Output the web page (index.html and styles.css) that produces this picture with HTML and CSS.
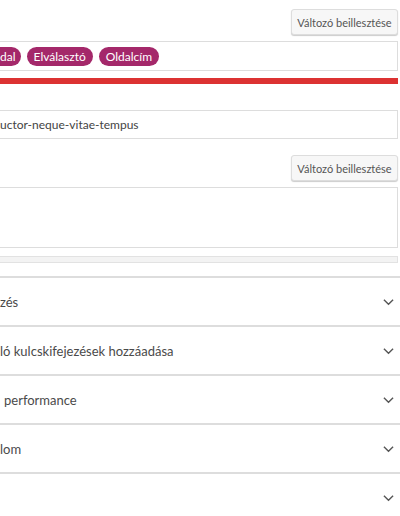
FILE: index.html
```html
<!DOCTYPE html>
<html lang="hu">
<head>
<meta charset="utf-8">
<link rel="stylesheet" href="styles.css">
</head>
<body>
<div class="panel">
  <div class="btn-row"><button class="btn">Változó beillesztése</button></div>
  <div class="field tags">
    <span class="pill pill-cut">dal</span>
    <span class="pill">Elválasztó</span>
    <span class="pill">Oldalcím</span>
  </div>
  <div class="meter meter-red"></div>
  <div class="field slug">uctor-neque-vitae-tempus</div>
  <div class="btn-row btn-row-2"><button class="btn">Változó beillesztése</button></div>
  <div class="field area"></div>
  <div class="meter meter-grey"></div>
  <div class="sections">
    <div class="section"><span class="label">zés</span><svg class="chev" viewBox="0 0 12 8"><path d="M1 1.5l5 5 5-5" /></svg></div>
    <div class="section"><span class="label">ló kulcskifejezések hozzáadása</span><svg class="chev" viewBox="0 0 12 8"><path d="M1 1.5l5 5 5-5" /></svg></div>
    <div class="section"><span class="label label-space">performance</span><svg class="chev" viewBox="0 0 12 8"><path d="M1 1.5l5 5 5-5" /></svg></div>
    <div class="section"><span class="label">lom</span><svg class="chev" viewBox="0 0 12 8"><path d="M1 1.5l5 5 5-5" /></svg></div>
    <div class="section"><span class="label"></span><svg class="chev" viewBox="0 0 12 8"><path d="M1 1.5l5 5 5-5" /></svg></div>
  </div>
</div>
</body>
</html>
```
FILE: styles.css
```css
html, body {
  margin: 0;
  padding: 0;
  background: #fff;
}
body {
  font-family: "Lato", "Segoe UI", sans-serif;
  color: #444;
  width: 400px;
  height: 516px;
  overflow: hidden;
}
.panel {
  padding-top: 9px;
  padding-right: 2px;
}
.btn-row {
  display: flex;
  justify-content: flex-end;
}
.btn-row-2 {
  margin-top: 16px;
}
.btn {
  height: 26px;
  width: 107px;
  padding: 0;
  font-family: inherit;
  font-size: 11px;
  color: #555;
  background: #f7f7f7;
  border: 1px solid #ddd;
  border-radius: 3px;
  box-shadow: 0 1px 1px #ccc;
}
.field {
  border: 1px solid #ddd;
  border-left: none;
  background: #fff;
  box-sizing: border-box;
}
.tags {
  margin-top: 6px;
  height: 30px;
  display: flex;
  align-items: center;
  gap: 6px;
}
.pill {
  background: #a4286a;
  color: #fff;
  font-size: 12px;
  height: 19px;
  line-height: 19px;
  padding: 0 7px;
  border-radius: 10px;
}
.pill-cut {
  padding-left: 0;
  padding-right: 5px;
  border-radius: 0 10px 10px 0;
}
.meter {
  box-sizing: border-box;
}
.meter-red {
  margin-top: 7px;
  height: 6px;
  background: #dc3232;
}
.slug {
  margin-top: 26px;
  height: 29px;
  line-height: 27px;
  font-size: 12px;
  color: #444;
}
.area {
  margin-top: 6px;
  height: 61px;
}
.meter-grey {
  margin-top: 8px;
  height: 7px;
  background: #f3f3f3;
  border: 1px solid #e2e2e2;
  border-left: none;
}
.sections {
  margin-top: 13px;
  margin-right: -2px;
  border-top: 2px solid #ddd;
}
.section {
  height: 47px;
  border-bottom: 2px solid #ddd;
  display: flex;
  align-items: center;
  justify-content: space-between;
  padding-right: 6px;
}
.label {
  font-size: 13px;
  color: #4a4a4a;
}
.label-space {
  padding-left: 4px;
}
.chev {
  width: 11px;
  height: 8px;
  fill: none;
  stroke: #555;
  stroke-width: 1.5;
}
```
